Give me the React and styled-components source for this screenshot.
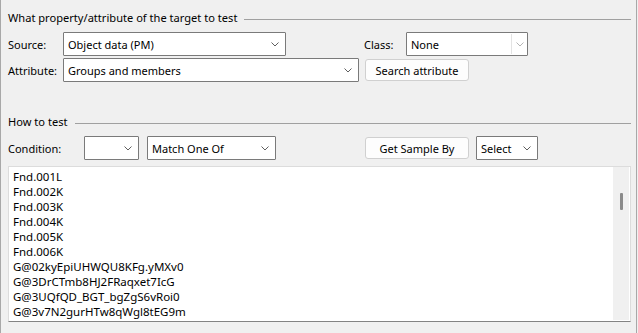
import React from "react";
import styled, { createGlobalStyle } from "styled-components";

const items = [
  "Fnd.001L",
  "Fnd.002K",
  "Fnd.003K",
  "Fnd.004K",
  "Fnd.005K",
  "Fnd.006K",
  "G@02kyEpiUHWQU8KFg.yMXv0",
  "G@3DrCTmb8HJ2FRaqxet7IcG",
  "G@3UQfQD_BGT_bgZgS6vRoi0",
  "G@3v7N2gurHTw8qWgl8tEG9m",
];

const Chevron = ({ light }) => (
  <svg width="8" height="5" viewBox="0 0 8 5">
    <polyline
      points="0.5,0.5 4,4 7.5,0.5"
      fill="none"
      stroke={light ? "#b4b4b4" : "#5f5f5f"}
      strokeWidth="1"
    />
  </svg>
);

const Combo = ({ width, value, split }) => (
  <ComboBox width={width}>
    <ComboText>{value}</ComboText>
    {split && <ComboSplit />}
    <ComboArrow split={split}>
      <Chevron light={split} />
    </ComboArrow>
  </ComboBox>
);

const App = () => {
  return (
    <>
      <GlobalStyle />
      <Frame>
        <Group>
          <GroupHeader>
            <HeaderText>What property/attribute of the target to test</HeaderText>
            <HeaderLine />
          </GroupHeader>
          <Row top={7}>
            <Label width={55}>Source:</Label>
            <Combo width={223} value="Object data (PM)" />
            <Label width={42} left={78}>
              Class:
            </Label>
            <Combo width={122} value="None" split />
          </Row>
          <Row top={2}>
            <Label width={55}>Attribute:</Label>
            <Combo width={296} value="Groups and members" />
            <Button width={104} left={6}>
              Search attribute
            </Button>
          </Row>
        </Group>

        <Group top={33}>
          <GroupHeader>
            <HeaderText>How to test</HeaderText>
            <HeaderLine />
          </GroupHeader>
          <Row top={7}>
            <Label width={76}>Condition:</Label>
            <Combo width={55} value="" />
            <Spacer width={8} />
            <Combo width={129} value="Match One Of" />
            <Button width={104} left={89}>
              Get Sample By
            </Button>
            <Spacer width={7} />
            <Combo width={62} value="Select" />
          </Row>
          <List>
            <ListBody>
              {items.map((item) => (
                <ListItem key={item}>{item}</ListItem>
              ))}
            </ListBody>
            <ScrollBar>
              <Thumb />
            </ScrollBar>
          </List>
        </Group>
      </Frame>
    </>
  );
};

const GlobalStyle = createGlobalStyle`
  html, body {
    margin: 0;
    padding: 0;
    background: #f0f0f0;
  }
  body {
    font-family: "Noto Sans", "Open Sans", sans-serif;
    font-size: 11px;
    color: #000;
  }
`;

const Frame = styled.div`
  width: 637px;
  height: 333px;
  box-sizing: border-box;
  border-left: 1px solid #a8a8a8;
  border-right: 1px solid #a8a8a8;
  background: #f0f0f0;
  padding: 11px 5px 0 7px;
`;

const Group = styled.div`
  margin-top: ${(p) => p.top || 0}px;
`;

const GroupHeader = styled.div`
  display: flex;
  align-items: center;
  gap: 7px;
  height: 14px;
`;

const HeaderText = styled.span`
  white-space: nowrap;
  line-height: 14px;
  font-size: 11.1px;
`;

const HeaderLine = styled.div`
  flex: 1;
  height: 1px;
  margin-top: 2px;
  background: #a0a0a0;
`;

const Row = styled.div`
  display: flex;
  align-items: center;
  height: 24px;
  margin-top: ${(p) => p.top || 0}px;
`;

const Label = styled.span`
  width: ${(p) => p.width}px;
  margin-left: ${(p) => p.left || 0}px;
  flex: none;
  white-space: nowrap;
`;

const Spacer = styled.div`
  width: ${(p) => p.width}px;
  flex: none;
`;

const ComboBox = styled.div`
  width: ${(p) => p.width}px;
  height: 24px;
  flex: none;
  box-sizing: border-box;
  border: 1px solid #7a7a7a;
  border-radius: 1px;
  background: #fff;
  display: flex;
  align-items: center;
`;

const ComboText = styled.span`
  flex: 1;
  padding-left: 4px;
  white-space: nowrap;
  overflow: hidden;
`;

const ComboSplit = styled.div`
  width: 1px;
  align-self: stretch;
  margin: 1px 0;
  background: #e3e3e3;
`;

const ComboArrow = styled.div`
  width: ${(p) => (p.split ? 15 : 14)}px;
  flex: none;
  display: flex;
  align-items: center;
  justify-content: ${(p) => (p.split ? "center" : "flex-start")};
  height: 100%;
`;

const Button = styled.div`
  width: ${(p) => p.width}px;
  height: 22px;
  flex: none;
  margin-left: ${(p) => p.left || 0}px;
  box-sizing: border-box;
  border: 1px solid #d0d0d0;
  border-radius: 3px;
  background: #fdfdfd;
  display: flex;
  align-items: center;
  justify-content: center;
  white-space: nowrap;
`;

const List = styled.div`
  margin-top: 6px;
  width: 623px;
  height: 156px;
  box-sizing: border-box;
  border: 1px solid #dcdcdc;
  border-bottom: 1px solid #838383;
  background: #fff;
  display: flex;
`;

const ListBody = styled.div`
  flex: 1;
  padding: 2px 0 0 4px;
  overflow: hidden;
  font-size: 11.5px;
`;

const ListItem = styled.div`
  height: 15px;
  line-height: 15px;
  white-space: nowrap;
`;

const ScrollBar = styled.div`
  width: 16px;
  margin: 0 1px 1px 0;
  background: #f0f0f0;
  flex: none;
`;

const Thumb = styled.div`
  width: 3px;
  height: 17px;
  margin: 26px 0 0 7px;
  background: #8a8a8a;
  border-radius: 1px;
`;

export default App;
